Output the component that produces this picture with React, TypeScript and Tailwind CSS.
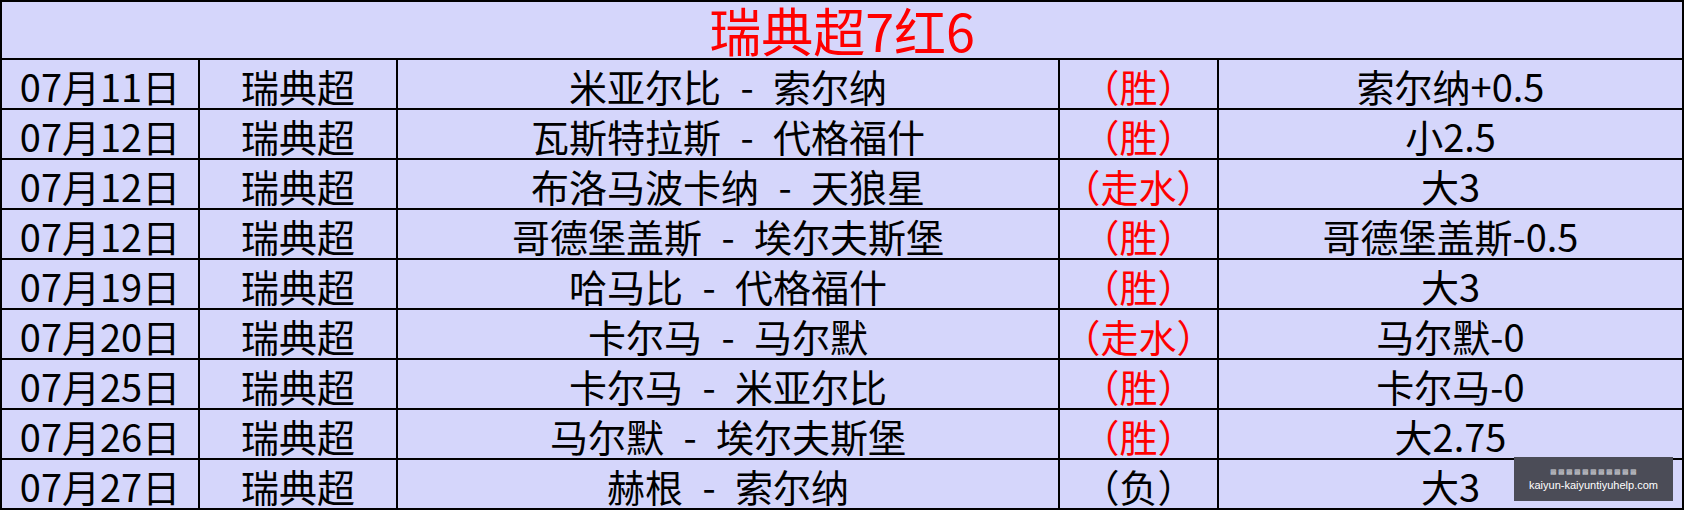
import React from "react"

type Row = {
  date: string
  league: string
  match: string
  result: string
  red: boolean
  tip: string
}

const rows: Row[] = [
  { date: "07月11日", league: "瑞典超", match: "米亚尔比 - 索尔纳", result: "（胜）", red: true, tip: "索尔纳+0.5" },
  { date: "07月12日", league: "瑞典超", match: "瓦斯特拉斯 - 代格福什", result: "（胜）", red: true, tip: "小2.5" },
  { date: "07月12日", league: "瑞典超", match: "布洛马波卡纳 - 天狼星", result: "（走水）", red: true, tip: "大3" },
  { date: "07月12日", league: "瑞典超", match: "哥德堡盖斯 - 埃尔夫斯堡", result: "（胜）", red: true, tip: "哥德堡盖斯-0.5" },
  { date: "07月19日", league: "瑞典超", match: "哈马比 - 代格福什", result: "（胜）", red: true, tip: "大3" },
  { date: "07月20日", league: "瑞典超", match: "卡尔马 - 马尔默", result: "（走水）", red: true, tip: "马尔默-0" },
  { date: "07月25日", league: "瑞典超", match: "卡尔马 - 米亚尔比", result: "（胜）", red: true, tip: "卡尔马-0" },
  { date: "07月26日", league: "瑞典超", match: "马尔默 - 埃尔夫斯堡", result: "（胜）", red: true, tip: "大2.75" },
  { date: "07月27日", league: "瑞典超", match: "赫根 - 索尔纳", result: "（负）", red: false, tip: "大3" },
]

const cell = "flex items-center justify-center border-r-2 border-b-2 border-black h-[50px] leading-none pt-[3px] whitespace-nowrap"

export default function App() {
  return (
    <div className="relative w-[1684px] h-[512px] bg-white font-['Noto_Sans_CJK_SC','Noto_Sans',sans-serif]">
      <div className="w-[1684px] border-l-2 border-t-2 border-black bg-[#d5d6fb]">
        <div className="flex items-center justify-center h-[58px] border-r-2 border-b-2 border-black text-[#ff0000] text-[52px] leading-none">
          瑞典超7红6
        </div>
        {rows.map((r, i) => (
          <div key={i} className="grid grid-cols-[198px_198px_662px_159px_465px] text-[38px] text-black">
            <div className={cell}>{r.date}</div>
            <div className={cell}>{r.league}</div>
            <div className={cell + " [word-spacing:11px]"}>{r.match}</div>
            <div className={cell + (r.red ? " text-[#ff0000]" : "")}>{r.result}</div>
            <div className={cell}>{r.tip}</div>
          </div>
        ))}
      </div>

      {/* watermark */}
      <div className="absolute left-[1514px] top-[457px] w-[159px] h-[44px] bg-[#4b4c57] flex flex-col items-center justify-center text-white font-['Liberation_Sans',sans-serif]">
        <div className="text-[7px] leading-none tracking-[1px] text-[#cfd0d6]">▩▩▩▩▩▩▩▩▩▩▩</div>
        <div className="text-[11px] leading-none mt-[5px]">kaiyun-kaiyuntiyuhelp.com</div>
      </div>
    </div>
  )
}
